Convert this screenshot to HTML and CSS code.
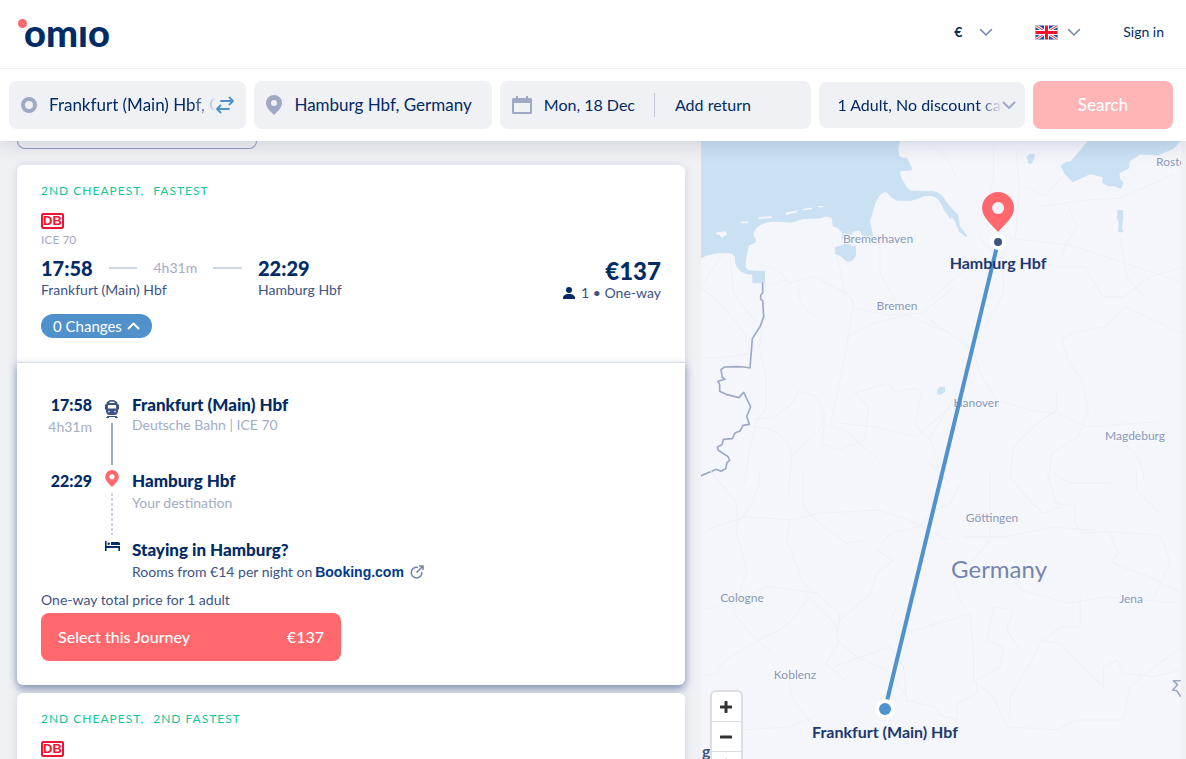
FILE: index.html
```html
<!DOCTYPE html>
<html lang="en">
<head>
<meta charset="utf-8">
<meta name="viewport" content="width=device-width, initial-scale=1">
<title>Frankfurt to Hamburg | Omio</title>
<link rel="stylesheet" href="styles.css">
</head>
<body>
<header class="site-header">
  <div class="topbar">
    <a class="logo" href="#" aria-label="Omio"><span class="logo-dot"></span>omıo</a>
    <nav class="topnav">
      <label class="currency">
        <select aria-label="Currency"><option>€</option></select>
        <svg class="chevron" width="14" height="9" viewBox="0 0 14 9"><path d="M1.500 1.500 7 7l5.500-5.500"/></svg>
      </label>
      <button class="language" aria-label="Language: English">
        <svg width="23" height="15" viewBox="0 0 23 15">
          <rect width="23" height="15" fill="#1f489c"/>
          <path d="M0 0l23 15M23 0L0 15" stroke="#fff" stroke-width="3"/>
          <path d="M0 0l23 15M23 0L0 15" stroke="#e8243d" stroke-width="1"/>
          <path d="M11.500 0v15M0 7.500h23" stroke="#fff" stroke-width="5"/>
          <path d="M11.500 0v15M0 7.500h23" stroke="#ee1231" stroke-width="3"/>
          <rect x=".5" y=".5" width="22" height="14" fill="none" stroke="#c3c9d8" stroke-opacity=".7"/>
        </svg>
        <svg class="chevron" width="14" height="9" viewBox="0 0 14 9"><path d="M1.500 1.500 7 7l5.500-5.500"/></svg>
      </button>
      <a class="signin" href="#">Sign in</a>
    </nav>
  </div>
  <form class="search">
    <div class="field">
      <svg width="16" height="16" viewBox="0 0 16 16"><circle cx="8" cy="8" r="6" fill="none" stroke="#9fa9c5" stroke-width="4"/></svg>
      <input class="faded" aria-label="From" value="Frankfurt (Main) Hbf, Germany">
      <button class="swap" type="button" aria-label="Swap stations">
        <svg width="18" height="18" viewBox="0 0 18 18"><path d="M5 5h12M13.500 1.500L17 5l-3.500 3.500M13 13H1.500M4.500 9.500L1 13l3.500 3.500" fill="none" stroke="#4d90cc" stroke-width="1.800" stroke-linecap="round" stroke-linejoin="round"/></svg>
      </button>
    </div>
    <div class="field">
      <svg width="16" height="20" viewBox="0 0 16 20"><path fill="#9fa9c5" fill-rule="evenodd" d="M8 0a8 8 0 0 1 8 8c0 4.500-4 8-8 12C4 16 0 12.500 0 8a8 8 0 0 1 8-8Zm0 5a3 3 0 1 0 0 6 3 3 0 0 0 0-6Z"/></svg>
      <input aria-label="To" value="Hamburg Hbf, Germany">
    </div>
    <div class="field dates">
      <svg width="20" height="18" viewBox="0 0 20 18"><path fill="#9fa9c5" fill-rule="evenodd" d="M4 0h2v2h8V0h2v2h2.500A1.500 1.500 0 0 1 20 3.500v13a1.500 1.500 0 0 1-1.500 1.500h-17A1.500 1.500 0 0 1 0 16.500v-13A1.500 1.500 0 0 1 1.500 2H4Zm-2 7v9h16V7Z"/></svg>
      <button type="button" class="date">Mon, 18 Dec</button>
      <button type="button" class="date return">Add return</button>
    </div>
    <button type="button" class="field passengers">
      <span class="faded">1 Adult, No discount cards</span>
      <svg class="chevron muted" width="14" height="9" viewBox="0 0 14 9"><path d="M1.500 1.500 7 7l5.500-5.500"/></svg>
    </button>
    <button type="submit" class="submit">Search</button>
  </form>
</header>

<main class="content">
  <section class="results" aria-label="Journeys">
    <div class="filter-box"></div>
    <article class="card expanded">
      <div class="summary">
        <p class="tags"><span>2nd cheapest,</span><span>Fastest</span></p>
        <div class="carrier-logo">DB</div>
        <p class="service">ICE 70</p>
        <div class="trip">
          <div class="departure">
            <div class="times"><strong class="time">17:58</strong><span class="duration">4h31m</span></div>
            <p class="station">Frankfurt (Main) Hbf</p>
          </div>
          <div>
            <strong class="time">22:29</strong>
            <p class="station">Hamburg Hbf</p>
          </div>
          <div class="fare">
            <strong class="price">€137</strong>
            <p class="station"><svg width="12" height="12" viewBox="0 0 12 12" fill="#002b66"><circle cx="6" cy="3" r="3"/><path d="M0 12v-1c0-2.500 2.500-4 6-4s6 1.500 6 4v1Z"/></svg>1 • One-way</p>
          </div>
        </div>
        <button class="changes">0 Changes<svg width="13" height="8" viewBox="0 0 13 8"><path d="M1.500 6.500l5-5 5 5" fill="none" stroke="#fff" stroke-width="2" stroke-linecap="round" stroke-linejoin="round"/></svg></button>
      </div>
      <div class="details">
        <ol class="timeline">
          <li class="stop first">
            <div class="when"><strong>17:58</strong><span>4h31m</span></div>
            <div class="track">
              <svg width="14" height="18" viewBox="0 0 14 18"><path fill="#3c5384" fill-rule="evenodd" d="M7 0c3.500 0 5.500 1.500 5.800 4.500H14v5h-1V11c0 2.500-1.500 4-3.500 4h-5C2.500 15 1 13.500 1 11V9.500H0v-5h1.200C1.500 1.500 3.500 0 7 0ZM4.500 1.800V3h5V1.800ZM3 5v3.500h8V5ZM4 10.800a.8.8 0 1 0 0 1.600.8.8 0 0 0 0-1.600Zm6 0a.8.8 0 1 0 0 1.600.8.8 0 0 0 0-1.600Z"/><path d="M1 18l1.500-2h9l1.500 2Z" fill="#3c5384"/><path d="M4 17.500h6" stroke="#fff"/></svg>
              <span class="line"></span>
            </div>
            <div class="what"><h3>Frankfurt (Main) Hbf</h3><p>Deutsche Bahn | ICE 70</p></div>
          </li>
          <li class="stop second">
            <div class="when"><strong>22:29</strong></div>
            <div class="track">
              <svg width="14" height="17" viewBox="0 0 16 20"><path fill="#ff696d" fill-rule="evenodd" d="M8 0a8 8 0 0 1 8 8c0 4.500-4 8-8 12C4 16 0 12.500 0 8a8 8 0 0 1 8-8Zm0 5a3 3 0 1 0 0 6 3 3 0 0 0 0-6Z"/></svg>
              <span class="line dashed"></span>
            </div>
            <div class="what"><h3>Hamburg Hbf</h3><p>Your destination</p></div>
          </li>
          <li class="stop third">
            <div class="when"></div>
            <div class="track">
              <svg width="15" height="10" viewBox="0 0 15 10"><path fill="#002b66" d="M0 0h1.600v5H15v5h-1.600V7H1.600v3H0ZM6 1h7.500A1.500 1.500 0 0 1 15 2.500V4H6Z"/><circle cx="3.700" cy="2.700" r="1.200" fill="#002b66"/></svg>
            </div>
            <div class="what"><h3>Staying in Hamburg?</h3><p class="rooms">Rooms from €14 per night on <a class="booking" href="#">Booking.com<svg width="14" height="14" viewBox="0 0 14 14"><path d="M8 2.500A5.300 5.300 0 1 0 11.800 7M9 1h4v4M13 1L6.500 7.500" fill="none" stroke="#7282a8" stroke-width="1.500"/></svg></a></p></div>
          </li>
        </ol>
        <p class="total">One-way total price for 1 adult</p>
        <button class="select"><span>Select this Journey</span><span>€137</span></button>
      </div>
    </article>
    <article class="card">
      <div class="summary">
        <p class="tags"><span>2nd cheapest,</span><span>2nd fastest</span></p>
        <div class="carrier-logo">DB</div>
      </div>
    </article>
  </section>

  <section class="map" aria-label="Map">
    <svg class="map-canvas" viewBox="0 0 480 618" preserveAspectRatio="xMidYMid slice">
      <g transform="translate(-11 -1) scale(.33333)">
        <g class="road">
          <path d="M30 440q80 60 140 150M36 655q80 0 150-15M100 340q-50 70-70 110M120 340l10 120 70 90M215 375q70 20 80 55l80-20 100 55 20 40 100 20 100-5 100-80M228 420l-10 120-10 80 20 90 0 95-30 40-20 90-15 100M228 440l60-20M325 430q-5 80 60 100M425 305l20 60 20 90 25 30-15 110-20 100-25 120-10 40 50 20 80 70 30 30M570 320l0 80 50 90M470 590l80-40 100-25 130 55M190 838l60-5 60-45 15-35 50 15 30 55-20 50-80 75-10 120M405 830l-10 80 50 20 80-30 10-100-40-40 60-20 40-10 20 25 60-10 20 10-20 100 50 50 20 80M450 850l100 10 130 30 100-90M190 860q90 0 115 80"/>
        </g>
        <g class="water">
          <path d="M33 2H630L625 28 628 48 640 54 650 52 666 84 664 92 632 94 630 103 638 122 652 144 662 152 732 154Q752 160 762 176L784 206V240L762 212Q748 172 728 168L700 169 686 176 662 183 620 182 606 174 588 156Q570 156 556 190L540 245 545 270 550 290 520 294 508 272 492 275 482 286 462 280 455 306 456 278 442 264 428 258 425 234 408 230 390 236 340 237 305 248 248 245Q204 250 192 276L191 290 198 298 196 308 178 316Q166 350 167 382L174 391 225 393V430H187V405Q146 402 136 372L134 350 124 340H84Q60 342 33 354Z"/>
          <path d="M436 320L458 316 466 310 480 314 490 320 498 318V348L486 362 476 366 464 360 454 350 436 342ZM742 752l20-11 4 12-14 11-11-3Z"/>
        </g>
        <path fill="#f4f6fb" d="M78 278l30-4 3 10-16 10-6-8-10-3ZM153 245h22v5h-22ZM205 231l40-2v5l-38 3ZM286 218l36-6v5l-34 8ZM338 207l28-4v5l-28 3ZM385 198h15v4h-15Z"/>
        <path class="border" d="M218 428v30l-6 8 0 12 6 4 3 48-10 28-24 38-7 88-16-3-25-1-36 1-10 8 4 24 8 5-21 6 5 10 0 20 22 10 36 9 14-16 21 44-12 28 8 24-19 3-9 17-15 6-8 17-27 2-4 16-14 7 2 9 30 20 5 11-8 7-4 18-14 8-14-6-48 20"/>
      </g>
      <g transform="translate(229 -1) scale(.33333)">
        <g class="road">
          <path d="M190 20v100l-20 80M258 30l10 120-12 140M0 20q70 30 75 100M285 140l60 30 60-70M330 200l140-20 100-5 160-72M570 290l20 120 50 60M240 295l180 20 120 40 210 70M395 190l20 10 25 60-30 50-15 40M145 270l15 40 80 70M0 480l150-130M220 400l0 60-60 110M0 540l130 90 20 70 50 80 100 30 80 10 90 40 210-15M395 600l30-20 100-20 60-60 170 80M395 600l20 60 40 60 20 90-30 80-80 50-10 80M240 1020l10-100 60-60 70-50V760M610 850l0 40-20 30q50 30 50 100M370 380l90 0 60 90 60 0 80-60 90-25M0 890l100-160M0 970l60 60"/>
        </g>
        <g class="water">
          <path d="M474 2h280l-25 25-45 20-55-3-30 20-3 22-28 14 3 18 9 10-6 19-22-8-18 0-17-10v-18l-37-8-52 24-24-24-12-24q10-15 30-14ZM288 52l10-10 17 0-3 14-8 16-10-2-2-14ZM563 210h16l0 25-3 28 4 14h-16l2-30-6-12ZM20 752l10-12 15 2-3 15-14 6ZM0 154L20 157 36 168 52 190 66 206 84 224 90 260 112 288 108 292 88 276 74 244 60 222 46 200 34 178 18 166 0 166Z"/>
        </g>
      </g>
      <g transform="translate(-11 329) scale(.33333)">
        <g class="road">
          <path d="M36 190l40-20 90-30 140 10 80-20 180-10 90 30 120 60M60 0l80 100 0 90 30 110-40 130 70 80 50 40M300 150l-10 60 50 130 110 90-10 80 60 50 90 40 60 80M210 0q0 90-70 160M340 0v110l50 50 80 60 60-10M36 420l80-20 120-50 150 20M36 620l40-10 30-40 100-60 60-30 40-30 50-70 80 80 10 60-40 60 60 50M450 450l90-80 20-60 50-40-50-30 40-50 90-20 30-40 60-30 30-60M600 460l20-50M610 500l100-30 70-30M290 600l20 90 90 110M430 590l170-60 40 60 10 100 80 20 50 50M160 780l140-10 90-40"/>
        </g>
      </g>
      <g transform="translate(229 329) scale(.33333)">
        <g class="road">
          <path d="M180 0v80l0 130-110 130 30 70M350 10l30 90 55 10 0 50 20 30 80-5 30 60-20 30 40 20 60 20 100 50M100 200l130 0 140-30 160 15 160 10 30 80-50 110M240 10q30 60 100 120l50-20M230 290l40 70 150 40 110-20 220 20M270 540l-40-60 20-60-60-10-20 100 50 20-10 60-70 40 0 40-60 30 0 50-70-20M0 470l120-40 10 120 0 80 60 50 40 90 150 10 60-30 140 0 20-100 100-80 110-70M330 510l60 10 60 60 70 70 0-60 40-20 20 40 90 10 80-20M240 740l0-60 60-100 30-60 60-50 60 0 0-90M620 0v60l70 70M370 10l50 30 120 0"/>
        </g>
        <path class="border" d="M752 632h-22l12 12-14 16 12 2 12 18"/>
      </g>
      <g class="city">
        <text x="177" y="102" text-anchor="middle">Bremerhaven</text>
        <text x="196" y="169" text-anchor="middle">Bremen</text>
        <text x="455" y="25">Rostock</text>
        <text x="275" y="266" text-anchor="middle">Hanover</text>
        <text x="434" y="299" text-anchor="middle">Magdeburg</text>
        <text x="291" y="381" text-anchor="middle">Göttingen</text>
        <text x="430" y="462" text-anchor="middle">Jena</text>
        <text x="41" y="461" text-anchor="middle">Cologne</text>
        <text x="94" y="538" text-anchor="middle">Koblenz</text>
      </g>
      <text class="country" x="298" y="437" text-anchor="middle">Germany</text>
      <text class="place cut" x="1" y="616">g</text>
      <path d="M297 101L184 568" stroke="#4f92cd" stroke-width="4"/>
      <circle cx="184" cy="568" r="10" fill="#fff"/><circle cx="184" cy="568" r="6" fill="#4f92cd"/>
      <circle cx="297" cy="101" r="8" fill="#fff"/><circle cx="297" cy="101" r="4" fill="#3c5384"/>
      <path fill="#ff696d" d="M297 51a16 16 0 0 1 16 16c0 9-9 16-16 24-7-8-16-15-16-24a16 16 0 0 1 16-16Z"/><circle cx="297" cy="67" r="6" fill="#f4f6fb"/>
      <text class="place" x="297" y="128" text-anchor="middle">Hamburg Hbf</text>
      <text class="place" x="184" y="597" text-anchor="middle">Frankfurt (Main) Hbf</text>
    </svg>
    <div class="map-controls">
      <button aria-label="Zoom in"><svg width="12" height="12" viewBox="0 0 12 12"><path d="M6 1v10M1 6h10"/></svg></button>
      <button aria-label="Zoom out"><svg width="12" height="12" viewBox="0 0 12 12"><path d="M1 6h10"/></svg></button>
      <button aria-label="Reset north"><svg width="12" height="18" viewBox="0 0 12 18"><path d="M6 0L9 8H3Z" class="needle"/><path d="M3 10h6l-3 8Z" class="needle south"/></svg></button>
    </div>
  </section>
</main>
</body>
</html>
```
FILE: styles.css
```css
* { box-sizing: border-box; margin: 0; padding: 0; }
body {
  display: flex; flex-direction: column; height: 100vh; overflow: hidden;
  background: #f0f1f5; color: #002b66;
  font-family: Lato, "Open Sans", sans-serif; font-size: 14px; line-height: 20px;
}
button, input, select { font: inherit; color: inherit; background: none; border: 0; }
button { cursor: pointer; }
a { color: inherit; text-decoration: none; }
svg { display: block; flex: none; }
ol { list-style: none; }

.site-header { position: relative; z-index: 2; background: #fff; box-shadow: 0 2px 20px rgba(0, 20, 60, .16); }
.topbar { display: flex; justify-content: space-between; align-items: center; height: 69px; padding: 0 22px 4px 24px; border-bottom: 1px solid #f0f1f4; }
.logo { position: relative; font-size: 38px; font-weight: 900; line-height: 38px; }
.logo-dot { position: absolute; left: -6px; top: 6px; width: 9px; height: 9px; border-radius: 50%; background: #ff696d; }
.topnav { display: flex; align-items: center; gap: 42px; }
.currency, .language { display: flex; align-items: center; gap: 9px; }
.currency { gap: 16px; }
.currency select { appearance: none; font-weight: 700; }
.chevron { fill: none; stroke: #7385ab; stroke-width: 1.500; stroke-linecap: round; stroke-linejoin: round; }
.chevron.muted { stroke: #9fa9c5; stroke-width: 2; }

.search { display: grid; grid-template-columns: 237fr 237fr 311fr 205fr 140fr; gap: 8px; align-items: center; padding: 12px 13px 12px 9px; font-size: 17px; }
.field { display: flex; align-items: center; gap: 12px; height: 48px; min-width: 0; padding: 0 12px; border-radius: 8px; background: #f0f1f5; }
.field input { flex: 1; width: 0; min-width: 0; outline: 0; }
.faded { -webkit-mask-image: linear-gradient(90deg, #000 calc(100% - 24px), transparent); mask-image: linear-gradient(90deg, #000 calc(100% - 24px), transparent); }
.field .swap { margin-left: -12px; }
.dates, .passengers { font-size: 16px; }
.date { white-space: nowrap; }
.return { height: 24px; padding-left: 20px; margin-left: 7px; border-left: 1px solid #c5cad8; }
.passengers { gap: 0; height: 46px; padding: 0 9px 0 18px; }
.passengers span { flex: 1; min-width: 0; overflow: hidden; white-space: nowrap; text-align: left; }
.submit { height: 48px; border-radius: 8px; background: #ffb4b6; color: #fff; font-weight: 500; }

.content { flex: 1; min-height: 0; display: grid; grid-template-columns: 146fr 100fr; padding-right: 5px; }
.results { display: flex; flex-direction: column; min-height: 0; padding: 0 16px 0 17px; overflow: hidden; }
.filter-box { flex: none; width: 240px; height: 8px; margin-bottom: 16px; border: 1px solid #8f9dc0; border-top: 0; border-radius: 0 0 8px 8px; }
.card { position: relative; flex: none; margin-bottom: 8px; border-radius: 6px; background: #fff; box-shadow: 0 1px 8px rgba(60, 83, 132, .2); }
.summary { padding: 16px 24px 24px; }
.tags { display: flex; gap: 9px; color: #10c795; font-size: 12px; letter-spacing: 1px; text-transform: uppercase; }
.carrier-logo { width: 23px; height: 16px; margin-top: 12px; border: 2px solid #f01430; border-radius: 2px; color: #f01430; font: 700 13px/12px "Liberation Sans", Arial, sans-serif; text-align: center; }
.service { margin: 3px 0 8px; color: #a3acc6; font-size: 12px; line-height: 16px; }
.trip { display: flex; }
.departure { width: 217px; }
.time { display: block; font-size: 20px; font-weight: 900; line-height: 24px; }
.times { display: flex; align-items: center; gap: 16px; padding-right: 16px; line-height: 24px; }
.duration { flex: 1; display: flex; align-items: center; gap: 16px; color: #a3acc6; }
.duration::before, .duration::after { content: ""; flex: 1; height: 2px; background: #cfd5e3; }
.station { display: flex; align-items: center; gap: 6px; color: #3c5384; }
.fare { margin-left: auto; padding-top: 3px; }
.price { display: block; font-size: 24px; font-weight: 900; line-height: 24px; text-align: right; }
.fare .station { margin-bottom: -3px; }
.changes { display: flex; align-items: center; gap: 5px; height: 24px; margin-top: 14px; padding: 0 12px; border-radius: 12px; background: #5191cb; color: #fff; font-size: 15px; }

.details { padding: 32px 24px 24px; border-top: 1px solid #dadeea; border-radius: 0 0 6px 6px; box-shadow: 0 4px 8px rgba(50, 75, 130, .5); }
.stop { display: grid; grid-template-columns: 51px 22px 1fr; gap: 9px; }
.when { display: flex; flex-direction: column; gap: 2px; text-align: right; color: #a3acc6; }
.when strong { color: #002b66; font-size: 16px; font-weight: 900; line-height: 20px; }
.what h3 { color: #002b66; font-size: 17px; font-weight: 900; line-height: 20px; }
.what p { color: #a3acc6; }
.track { display: flex; flex-direction: column; align-items: center; }
.line { width: 2px; height: 42px; margin-top: 5px; background: #9fa9c5; }
.line.dashed { margin-top: 6px; background: repeating-linear-gradient(#cfd0dd 0 3px, transparent 3px 5px); }
.first { min-height: 75px; }
.first .track { padding-top: 5px; }
.second { min-height: 70px; }
.second .when, .second .what { padding-top: 1px; }
.second .what p { margin-top: 2px; }
.third .what p { margin-top: 2px; }
.third .track { padding-top: 1px; }
.third .what .rooms { display: flex; gap: 3px; color: #3c5384; }
.booking { display: flex; align-items: center; gap: 6px; color: #003b8c; font-family: "Liberation Sans", Arial, sans-serif; font-weight: 700; }
.total { margin: 8px 0 3px; color: #3c5384; }
.select { display: flex; justify-content: space-between; align-items: center; width: 300px; max-width: 100%; height: 48px; padding: 0 17px; border-radius: 8px; background: #ff696d; color: #fff; font-size: 16px; font-weight: 500; }

.map { position: relative; min-height: 0; overflow: hidden; background: #f4f6fb; }
.map-canvas { width: 100%; height: 100%; }
.water { fill: #cae1f4; }
.road { fill: none; stroke: #edf0f5; stroke-width: 3; }
.border { fill: none; stroke: #9fa9c5; stroke-width: 5; stroke-linejoin: round; }
.city, .country { paint-order: stroke; stroke: #f8f9fc; stroke-width: 2px; }
.city { fill: #8997b9; font-size: 12px; }
.country { fill: #7485ad; font-size: 24px; }
.place { fill: #1c3871; font-size: 16px; font-weight: 700; }
.place.cut { fill: #3c5384; }
.map-controls { position: absolute; left: 9px; top: calc(100% - 69px); width: 33px; border: 2px solid #dcdee2; border-radius: 6px; background: #fff; }
.map-controls button { display: flex; justify-content: center; align-items: center; width: 100%; height: 29px; }
.map-controls button + button { height: 30px; border-top: 1px solid #ddd; }
.map-controls path { fill: none; stroke: #333; stroke-width: 3; stroke-linecap: round; }
.map-controls .needle { fill: #333; stroke: none; }
.map-controls .south { fill: #bbb; }
```
